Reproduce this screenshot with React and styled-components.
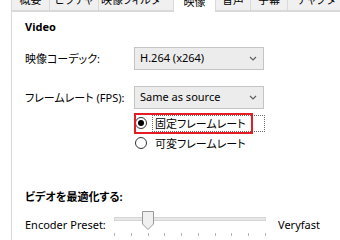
import React from 'react';
import styled, { createGlobalStyle } from 'styled-components';

const GlobalStyle = createGlobalStyle`
  html, body {
    margin: 0;
    padding: 0;
    background: #ffffff;
    overflow: hidden;
  }
  body {
    font-family: "Noto Sans", "Noto Sans CJK JP", sans-serif;
    font-size: 11px;
    color: #000000;
    font-feature-settings: "palt";
  }
`;

const Styled = {
  Page: styled.div`
    width: 340px;
    height: 240px;
    overflow: hidden;
  `,
  TabStrip: styled.div`
    display: flex;
    align-items: flex-end;
    margin-top: -9px;
    margin-left: 11px;
    height: 20px;
    position: relative;
    z-index: 1;
  `,
  Tab: styled.div`
    flex: none;
    box-sizing: border-box;
    width: ${props => props.w}px;
    height: ${props => (props.active ? 21 : 20)}px;
    margin-bottom: ${props => (props.active ? -1 : 0)}px;
    background: ${props => (props.active ? '#ffffff' : '#f0f0f0')};
    border: 1px solid #d9d9d9;
    border-bottom: ${props => (props.active ? 'none' : '1px solid #d9d9d9')};
    margin-right: -1px;
    display: flex;
    align-items: flex-end;
    justify-content: center;
    padding-bottom: 3px;
    line-height: 15px;
    white-space: nowrap;
    overflow: hidden;
    color: #000;
  `,
  Panel: styled.div`
    margin-left: 11px;
    border-left: 1px solid #d9d9d9;
    border-top: 1px solid #d9d9d9;
    padding: 7px 0 0 13px;
    height: 240px;
  `,
  Title: styled.div`
    font-weight: 700;
    line-height: 16px;
  `,
  FieldRow: styled.div`
    display: flex;
    align-items: center;
    margin-top: ${props => props.mt}px;
    height: 23px;
  `,
  Label: styled.div`
    width: 109px;
    flex: none;
    line-height: 16px;
  `,
  Combo: styled.div`
    box-sizing: border-box;
    width: 130px;
    height: 23px;
    border: 1px solid #c4c4c4;
    background: #ececec;
    display: flex;
    align-items: center;
    justify-content: space-between;
    padding: 0 6px 1px 5px;
    line-height: 16px;
  `,
  RadioGroup: styled.div`
    position: relative;
    margin-top: 4px;
    margin-left: 109px;
  `,
  RadioRow: styled.div`
    display: flex;
    align-items: center;
    height: 20px;
    padding-left: 1px;
    gap: 5px;
  `,
  Radio: styled.span`
    box-sizing: border-box;
    width: 12px;
    height: 12px;
    border-radius: 50%;
    border: 1px solid #333333;
    background: #ffffff;
    display: flex;
    align-items: center;
    justify-content: center;
    flex: none;
    &::after {
      content: '';
      display: ${props => (props.checked ? 'block' : 'none')};
      width: 6px;
      height: 6px;
      border-radius: 50%;
      background: #000000;
    }
  `,
  RadioText: styled.span`
    box-sizing: border-box;
    line-height: 15px;
    padding: 0 2px;
    border: 1px dotted ${props => (props.focused ? '#6b6b6b' : 'transparent')};
    width: ${props => (props.focused ? '113px' : 'auto')};
  `,
  Annotation: styled.div`
    position: absolute;
    left: 0;
    top: 0;
    box-sizing: border-box;
    width: 119px;
    height: 21px;
    border: 2px solid #e41c23;
    pointer-events: none;
  `,
  Section: styled.div`
    font-weight: 700;
    line-height: 16px;
    margin-top: 36px;
  `,
  SliderRow: styled.div`
    display: flex;
    align-items: flex-start;
    margin-top: 5px;
  `,
  SliderLabel: styled.div`
    width: 89px;
    flex: none;
    line-height: 16px;
    padding-top: 7px;
  `,
  Slider: styled.div`
    position: relative;
    width: 152px;
    height: 28px;
    flex: none;
  `,
  Track: styled.div`
    box-sizing: border-box;
    margin-top: 7px;
    height: 4px;
    background: #e7e7e7;
    border: 1px solid #d6d6d6;
  `,
  Thumb: styled.svg`
    position: absolute;
    left: 28px;
    top: 1px;
  `,
  Ticks: styled.div`
    display: flex;
    justify-content: space-between;
    margin-top: 12px;
  `,
  Tick: styled.span`
    width: 1px;
    height: 3px;
    background: #b4b4b4;
  `,
  SliderValue: styled.div`
    line-height: 16px;
    padding-top: 7px;
    margin-left: 12px;
  `,
};

const tabs = [
  { label: '概要', w: 39 },
  { label: 'ピクチャ', w: 50 },
  { label: '映像フィルター', w: 76 },
  { label: '映像', w: 43, active: true },
  { label: '音声', w: 36 },
  { label: '字幕', w: 38 },
  { label: 'チャプター', w: 70 },
];

function Chevron() {
  return (
    <svg width="8" height="5" viewBox="0 0 8 5">
      <path d="M1 1 L4 4 L7 1" fill="none" stroke="#606060" strokeWidth="1.2" />
    </svg>
  );
}

export default function App() {
  return (
    <Styled.Page>
      <GlobalStyle />
      <Styled.TabStrip>
        {tabs.map(tab => (
          <Styled.Tab key={tab.label} w={tab.w} active={tab.active}>
            {tab.label}
          </Styled.Tab>
        ))}
      </Styled.TabStrip>
      <Styled.Panel>
        <Styled.Title>Video</Styled.Title>

        <Styled.FieldRow mt={12}>
          <Styled.Label>映像コーデック:</Styled.Label>
          <Styled.Combo>
            H.264 (x264)
            <Chevron />
          </Styled.Combo>
        </Styled.FieldRow>

        <Styled.FieldRow mt={16}>
          <Styled.Label>フレームレート (FPS):</Styled.Label>
          <Styled.Combo>
            Same as source
            <Chevron />
          </Styled.Combo>
        </Styled.FieldRow>

        <Styled.RadioGroup>
          <Styled.RadioRow>
            <Styled.Radio checked />
            <Styled.RadioText focused>固定フレームレート</Styled.RadioText>
          </Styled.RadioRow>
          <Styled.RadioRow>
            <Styled.Radio />
            <Styled.RadioText>可変フレームレート</Styled.RadioText>
          </Styled.RadioRow>
          <Styled.Annotation />
        </Styled.RadioGroup>

        <Styled.Section>ビデオを最適化する:</Styled.Section>

        <Styled.SliderRow>
          <Styled.SliderLabel>Encoder Preset:</Styled.SliderLabel>
          <Styled.Slider>
            <Styled.Track />
            <Styled.Thumb width="12" height="19" viewBox="0 0 12 19">
              <path d="M0.5 0.5 H11.5 V13 L6 18.5 L0.5 13 Z" fill="#f0f0f0" stroke="#9a9a9a" />
            </Styled.Thumb>
            <Styled.Ticks>
              {Array.from({ length: 10 }).map((_, i) => (
                <Styled.Tick key={i} />
              ))}
            </Styled.Ticks>
          </Styled.Slider>
          <Styled.SliderValue>Veryfast</Styled.SliderValue>
        </Styled.SliderRow>
      </Styled.Panel>
    </Styled.Page>
  );
}
